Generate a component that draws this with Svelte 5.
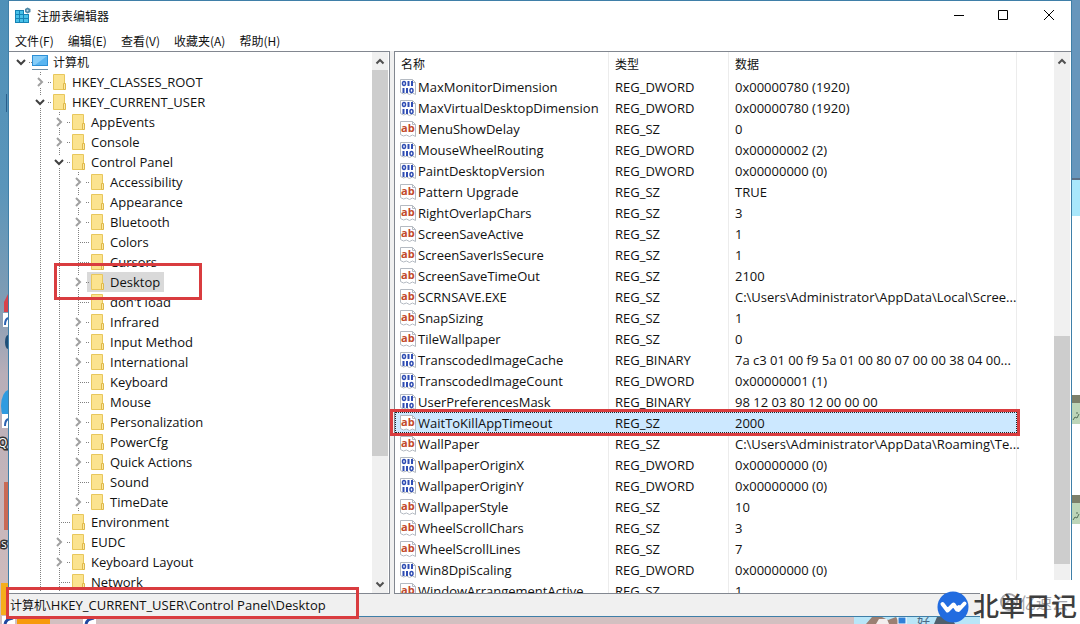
<script lang="ts">
  type TreeNode = { name: string; depth: number; state?: 'open' | 'closed' };
  type RegValue = { name: string; type: string; data: string };

  const menus = ['文件(F)', '编辑(E)', '查看(V)', '收藏夹(A)', '帮助(H)'];

  let nodes: TreeNode[] = $state([
    { name: '计算机', depth: 0, state: 'open' },
    { name: 'HKEY_CLASSES_ROOT', depth: 1, state: 'closed' },
    { name: 'HKEY_CURRENT_USER', depth: 1, state: 'open' },
    { name: 'AppEvents', depth: 2, state: 'closed' },
    { name: 'Console', depth: 2, state: 'closed' },
    { name: 'Control Panel', depth: 2, state: 'open' },
    { name: 'Accessibility', depth: 3, state: 'closed' },
    { name: 'Appearance', depth: 3, state: 'closed' },
    { name: 'Bluetooth', depth: 3, state: 'closed' },
    { name: 'Colors', depth: 3 },
    { name: 'Cursors', depth: 3 },
    { name: 'Desktop', depth: 3, state: 'closed' },
    { name: "don't load", depth: 3 },
    { name: 'Infrared', depth: 3, state: 'closed' },
    { name: 'Input Method', depth: 3, state: 'closed' },
    { name: 'International', depth: 3, state: 'closed' },
    { name: 'Keyboard', depth: 3 },
    { name: 'Mouse', depth: 3 },
    { name: 'Personalization', depth: 3, state: 'closed' },
    { name: 'PowerCfg', depth: 3, state: 'closed' },
    { name: 'Quick Actions', depth: 3, state: 'closed' },
    { name: 'Sound', depth: 3 },
    { name: 'TimeDate', depth: 3, state: 'closed' },
    { name: 'Environment', depth: 2 },
    { name: 'EUDC', depth: 2, state: 'closed' },
    { name: 'Keyboard Layout', depth: 2, state: 'closed' },
    { name: 'Network', depth: 2 }
  ]);

  const values: RegValue[] = [
    { name: 'MaxMonitorDimension', type: 'REG_DWORD', data: '0x00000780 (1920)' },
    { name: 'MaxVirtualDesktopDimension', type: 'REG_DWORD', data: '0x00000780 (1920)' },
    { name: 'MenuShowDelay', type: 'REG_SZ', data: '0' },
    { name: 'MouseWheelRouting', type: 'REG_DWORD', data: '0x00000002 (2)' },
    { name: 'PaintDesktopVersion', type: 'REG_DWORD', data: '0x00000000 (0)' },
    { name: 'Pattern Upgrade', type: 'REG_SZ', data: 'TRUE' },
    { name: 'RightOverlapChars', type: 'REG_SZ', data: '3' },
    { name: 'ScreenSaveActive', type: 'REG_SZ', data: '1' },
    { name: 'ScreenSaverIsSecure', type: 'REG_SZ', data: '1' },
    { name: 'ScreenSaveTimeOut', type: 'REG_SZ', data: '2100' },
    { name: 'SCRNSAVE.EXE', type: 'REG_SZ', data: 'C:\\Users\\Administrator\\AppData\\Local\\Scree...' },
    { name: 'SnapSizing', type: 'REG_SZ', data: '1' },
    { name: 'TileWallpaper', type: 'REG_SZ', data: '0' },
    { name: 'TranscodedImageCache', type: 'REG_BINARY', data: '7a c3 01 00 f9 5a 01 00 80 07 00 00 38 04 00...' },
    { name: 'TranscodedImageCount', type: 'REG_DWORD', data: '0x00000001 (1)' },
    { name: 'UserPreferencesMask', type: 'REG_BINARY', data: '98 12 03 80 12 00 00 00' },
    { name: 'WaitToKillAppTimeout', type: 'REG_SZ', data: '2000' },
    { name: 'WallPaper', type: 'REG_SZ', data: 'C:\\Users\\Administrator\\AppData\\Roaming\\Te...' },
    { name: 'WallpaperOriginX', type: 'REG_DWORD', data: '0x00000000 (0)' },
    { name: 'WallpaperOriginY', type: 'REG_DWORD', data: '0x00000000 (0)' },
    { name: 'WallpaperStyle', type: 'REG_SZ', data: '10' },
    { name: 'WheelScrollChars', type: 'REG_SZ', data: '3' },
    { name: 'WheelScrollLines', type: 'REG_SZ', data: '7' },
    { name: 'Win8DpiScaling', type: 'REG_DWORD', data: '0x00000000 (0)' },
    { name: 'WindowArrangementActive', type: 'REG_SZ', data: '1' }
  ];

  let selectedKey = $state('Desktop');
  let selectedValue = $state('WaitToKillAppTimeout');

  // Drop every node that sits below a closed one
  let visible = $derived.by(() => {
    const result: TreeNode[] = [];
    let hiddenBelow = Infinity;
    for (const node of nodes) {
      if (node.depth > hiddenBelow) continue;
      hiddenBelow = node.state === 'closed' ? node.depth : Infinity;
      result.push(node);
    }
    return result;
  });

  function toggle(node: TreeNode) {
    node.state = node.state === 'open' ? 'closed' : 'open';
  }
</script>

{#snippet scrollbar(before: number, thumb: number, after: number)}
  <div class="scrollbar">
    <button aria-label="Scroll up">
      <svg width="10" height="7" viewBox="0 0 10 7"><path d="M1.5 5.5 5 2l3.5 3.5" /></svg>
    </button>
    <span style="flex-grow: {before}"></span>
    <span class="thumb" style="flex-grow: {thumb}"></span>
    <span style="flex-grow: {after}"></span>
    <button aria-label="Scroll down">
      <svg width="10" height="7" viewBox="0 0 10 7"><path d="M1.5 1.5 5 5l3.5-3.5" /></svg>
    </button>
  </div>
{/snippet}

<div class="desktop">
  <!-- Slivers of wallpaper and desktop icons round the window -->
  <svg class="wall-left" width="8" height="624" viewBox="0 0 8 624">
    <defs>
      <linearGradient id="sky" x1="0" y1="0" x2="0" y2="1">
        <stop offset="0" stop-color="#4f90b8" />
        <stop offset="0.3" stop-color="#5a95ba" />
        <stop offset="0.48" stop-color="#7f9cb4" />
        <stop offset="0.6" stop-color="#b8aeb8" />
        <stop offset="1" stop-color="#d2bdbd" />
      </linearGradient>
    </defs>
    <rect width="8" height="624" fill="url(#sky)" />
    <rect x="6" y="94" width="1" height="18" fill="#2a5f8c" />
    <path d="M8 294 4 302v10h4z" fill="#d8434c" />
    <rect x="3" y="313" width="5" height="14" fill="#fff" />
    <path d="M5 325c0-4 1-6 3-7" stroke="#2b62b0" stroke-width="2" fill="none" />
    <ellipse cx="8" cy="342" rx="3" ry="7" fill="#1f4f77" />
    <ellipse cx="9" cy="406" rx="8" ry="16" fill="#2f9be0" />
    <rect x="2" y="414" width="6" height="14" fill="#fff" />
    <path d="M5 426c0-4 1-6 3-7" stroke="#2b62b0" stroke-width="2" fill="none" />
    <rect x="4" y="482" width="4" height="48" fill="#c96a55" />
    <text x="-2" y="447" class="icon-label">Q</text>
    <text x="1" y="548" class="icon-label">s</text>
    <rect x="1" y="583" width="7" height="32" fill="#f5ae1c" />
  </svg>
  <svg class="wall-right" width="8" height="624" viewBox="0 0 8 624">
    <rect width="8" height="624" fill="#fff" />
    <rect width="8" height="180" fill="#6796bc" />
    <rect y="178" width="8" height="2" fill="#5c6f85" />
    <rect y="180" width="8" height="36" fill="#a9e7fb" />
    <g id="plant">
      <rect y="395" width="8" height="8" fill="#7c7f6a" />
      <rect y="403" width="8" height="21" fill="#bdd5b8" />
      <path d="M1 420l2-3 2 1 2-4M4 413h2" stroke="#54705a" fill="none" />
    </g>
    <use href="#plant" y="100" />
  </svg>
  <svg class="wall-bottom-left" width="100" height="8" viewBox="0 0 100 8">
    <rect x="17" width="33" height="8" fill="#f79a0c" />
    <rect x="2" width="13" height="8" fill="#fff" />
    <path d="M5 8c1-4 3-5 8-6" stroke="#2147a0" stroke-width="3" fill="none" />
    <rect x="83" width="13" height="8" fill="#fff" />
    <path d="M86 8c1-4 3-5 8-6" stroke="#2147a0" stroke-width="3" fill="none" />
  </svg>
  <svg class="wall-bottom-right" width="226" height="8" viewBox="0 0 226 8">
    <rect width="226" height="8" fill="#b9e6f8" />
    <path d="M12 8l6-7h10l6 3 8-3 4 7z" fill="#9b8073" />
    <path d="M22 8l3-5h8l2 5z" fill="#f3eeee" />
    <rect x="44" y="1" width="8" height="7" fill="#2f80d8" stroke="#fff" />
    <text x="63" y="10" font-size="13" fill="#4c6a85">好</text>
    <path d="M80 8l3-7h14l4 7z" fill="#50606c" />
  </svg>

  <div class="window">
    <header class="titlebar">
      <svg width="17" height="17" viewBox="0 0 17 17">
        <path d="M0 3h9v4h5v9H0z" fill="#1583b5" />
        <path d="M1 4h3v3H1zM5 4h3v3H5zM1 8h3v3H1zM5 8h3v3H5zM9 8h4v3H9zM1 12h3v3H1zM5 12h3v3H5zM9 12h4v3H9z" fill="#47c0e8" />
        <path d="M12.500.500 15.500 2v3l-3 1.500L10 5V2z" fill="#4d86a5" />
        <circle cx="12.500" cy="3.500" r="1" fill="#b8dced" />
      </svg>
      <h1>注册表编辑器</h1>
      <div class="controls">
        <button aria-label="Minimize"><svg width="12" height="12" viewBox="0 0 12 12"><path d="M1 5.500h10" /></svg></button>
        <button aria-label="Maximize"><svg width="12" height="12" viewBox="0 0 12 12"><path d="M.5.500h9v9h-9z" /></svg></button>
        <button aria-label="Close"><svg width="12" height="12" viewBox="0 0 12 12"><path d="M1 0l10 10M11 0 1 10" /></svg></button>
      </div>
    </header>

    <nav class="menubar">
      {#each menus as menu}
        <button>{menu}</button>
      {/each}
    </nav>

    <div class="panes">
      <section class="pane tree-pane">
        <ul class="tree">
          {#each visible as node (node.name)}
            <li>
              {#each { length: Math.max(node.depth - 1, 0) } as _, i}
                {#if i === 0}<span class="cell"></span>{/if}
                <span class="cell guide"></span>
              {/each}
              {#if node.depth === 1}<span class="cell"></span>{/if}
              <span class="cell branch" class:line={node.depth > 0}>
                {#if node.state}
                  <svg class="stub" width="4" height="1"><path d="M0 .5h4" /></svg>
                  <button class="toggle" class:open={node.state === 'open'} aria-label="Toggle {node.name}" onclick={() => toggle(node)}>
                    <svg width="10" height="10" viewBox="0 0 10 10">
                      <path d={node.state === 'open' ? 'M1 3l4 4 4-4' : 'M3 1l4 4-4 4'} />
                    </svg>
                  </button>
                {:else}
                  <svg class="stub" width="12" height="1"><path d="M0 .5h12" /></svg>
                {/if}
              </span>
              <button class="key" class:selected={node.name === selectedKey} class:cjk={node.depth === 0} onclick={() => (selectedKey = node.name)}>
                {#if node.depth === 0}
                  <svg width="18" height="16" viewBox="0 0 18 16">
                    <path d="M2 1h16v11H2z" fill="#2c8fd6" />
                    <path d="M3 2h14v9H3z" fill="#58b4f0" />
                    <path d="M3 2h14L5 11H3z" fill="#86cdf8" />
                    <path d="M2 15.500h16" stroke="#6f8ea6" />
                  </svg>
                {:else}
                  <svg width="18" height="16" viewBox="0 0 18 16">
                    <path d="M4.500.500h11v15h-11z" fill="#fbe38f" stroke="#e8c75c" />
                    <path d="M14.500 9.500h2v6h-2z" fill="#fbe9a8" stroke="#dfb94a" />
                  </svg>
                {/if}
                <span>{node.name}</span>
              </button>
            </li>
          {/each}
        </ul>
        {@render scrollbar(0, 386, 119)}
      </section>

      <section class="pane list-pane">
        <div class="list">
          <table>
            <colgroup>
              <col class="col-name" />
              <col class="col-type" />
              <col />
            </colgroup>
            <thead>
              <tr><th>名称</th><th>类型</th><th>数据</th></tr>
            </thead>
            <tbody>
              {#each values as value}
                <tr class:selected={value.name === selectedValue} onclick={() => (selectedValue = value.name)}>
                  <td>
                    <div class="name">
                      <svg width="16" height="16" viewBox="0 0 16 16">
                        <path d="M.5.500h12l3 3v12l-3-1.500-3 1.500-3-1.500-3 1-3-1.500z" fill="#fff" stroke="#b4bac2" />
                        <path d="M12.500.500v3h3" fill="none" stroke="#b4bac2" />
                        {#if value.type === 'REG_SZ'}
                          <text x="1" y="11" class="ab">ab</text>
                        {:else}
                          <g class="bits">
                            <ellipse cx="4" cy="4.500" rx="1.500" ry="2" />
                            <path d="M8.500 2v5M12 2v5" />
                            <path d="M3.500 9v5M7 9v5" />
                            <ellipse cx="11.500" cy="11.500" rx="1.500" ry="2" />
                          </g>
                        {/if}
                      </svg>
                      <span>{value.name}</span>
                    </div>
                  </td>
                  <td>{value.type}</td>
                  <td>{value.data}</td>
                </tr>
              {/each}
            </tbody>
          </table>
        </div>
        {@render scrollbar(266, 228, 11)}
      </section>
    </div>

    <footer class="status"><span class="cjk">计算机</span>\HKEY_CURRENT_USER\Control Panel\Desktop</footer>
  </div>

  <div class="mark mark-key"></div>
  <div class="mark mark-value"></div>
  <div class="mark mark-path"></div>

  <div class="watermark">
    <div class="ghost">
      <svg width="22" height="20" viewBox="0 0 22 20">
        <circle cx="11" cy="10" r="8" />
        <path d="M6 12c2 2 4-4 6-4s3 4 5 2" />
      </svg>
      <span>亿速云</span>
    </div>
    <svg class="badge" width="32" height="32" viewBox="0 0 32 32">
      <circle cx="16" cy="16" r="15.500" fill="#226ce0" />
      <path d="M5.500 13l5 6.500 6-6 3.500 5 2-2.500M21.500 19l6-6.500" fill="none" stroke="#fff" stroke-width="4" stroke-linecap="round" stroke-linejoin="round" />
    </svg>
    <strong>北单日记</strong>
  </div>
</div>

<style>
  :global(body) {
    margin: 0;
  }

  .desktop {
    position: relative;
    box-sizing: border-box;
    height: 100vh;
    padding: 0 8px 7px;
    overflow: hidden;
    background: #d3c0c1;
    color: #111;
    font-family: 'Open Sans', 'Noto Sans CJK SC', sans-serif;
    font-size: 13px;
    line-height: 20px;
  }

  .wall-left {
    position: absolute;
    top: 0;
    left: 0;
  }

  .wall-right {
    position: absolute;
    top: 0;
    right: 0;
  }

  .wall-bottom-left {
    position: absolute;
    bottom: 0;
    left: 0;
  }

  .wall-bottom-right {
    position: absolute;
    right: 0;
    bottom: 0;
  }

  .icon-label {
    fill: #fff;
    stroke: #333;
    stroke-width: 3;
    paint-order: stroke;
    font-size: 12px;
  }

  .window {
    position: relative;
    display: flex;
    flex-direction: column;
    box-sizing: border-box;
    height: 100%;
    border: 1px solid #3f7fa8;
    background: #fff;
  }

  button {
    padding: 0;
    border: 0;
    background: none;
    color: inherit;
    font: inherit;
  }

  svg {
    display: block;
    flex: none;
  }

  .cjk,
  h1,
  .menubar,
  th {
    font-family: 'Noto Sans CJK SC', sans-serif;
    font-size: 12px;
  }

  /* Title and menu */
  .titlebar {
    display: flex;
    align-items: center;
    gap: 5px;
    height: 29px;
    padding-left: 6px;
  }

  h1 {
    flex: 1;
    margin: 0;
    font-weight: 400;
  }

  .controls {
    display: flex;
  }

  .controls button {
    display: grid;
    place-items: center;
    width: 45px;
    height: 29px;
  }

  .controls path {
    fill: none;
    stroke: #000;
  }

  .menubar {
    display: flex;
    gap: 14px;
    height: 21px;
    padding-left: 6px;
  }

  /* Panes */
  .panes {
    display: grid;
    grid-template-columns: 381px 1fr;
    gap: 4px;
    flex: 1;
    min-height: 0;
    background: #f0f0f0;
  }

  .pane {
    display: flex;
    min-width: 0;
    min-height: 0;
    border-top: 1px solid #828790;
    border-bottom: 1px solid #828790;
    background: #fff;
  }

  .tree-pane {
    padding-right: 1px;
    border-right: 1px solid #828790;
  }

  .list-pane {
    padding-right: 1px;
    border-left: 1px solid #828790;
  }

  .scrollbar {
    display: flex;
    flex-direction: column;
    width: 16px;
    background: #f0f0f0;
  }

  .scrollbar button {
    display: grid;
    place-items: center;
    height: 18px;
  }

  .scrollbar path {
    fill: none;
    stroke: #505050;
    stroke-width: 2;
  }

  .thumb {
    background: #cdcdcd;
  }

  /* Key tree */
  .tree {
    flex: 1;
    margin: 0;
    padding: 0 0 0 2px;
    overflow: hidden;
    list-style: none;
  }

  .tree li {
    display: flex;
    height: 20px;
  }

  .cell {
    position: relative;
    width: 19px;
    height: 20px;
  }

  .guide,
  .line {
    background: repeating-linear-gradient(#808080 0 1px, transparent 1px 2px) 10px 0 / 1px 100% no-repeat;
  }

  .toggle {
    display: grid;
    place-items: center;
    width: 17px;
    height: 12px;
    margin: 4px 1px;
    background: #fff;
  }

  .toggle path {
    fill: none;
    stroke: #a0a0a0;
    stroke-width: 2;
  }

  .toggle.open path {
    stroke: #404040;
  }

  .stub {
    position: absolute;
    top: 10px;
    right: -3px;
    z-index: 1;
  }

  .stub path {
    stroke: #808080;
    stroke-dasharray: 1 1;
  }

  .key {
    display: flex;
    align-items: center;
    gap: 5px;
    height: 20px;
    padding-right: 4px;
    white-space: nowrap;
  }

  .key.selected {
    background: #d9d9d9;
  }

  /* Value list */
  .list {
    flex: 1;
    min-width: 0;
    padding-right: 37px;
    overflow: hidden;
  }

  table {
    width: 100%;
    border-collapse: separate;
    border-spacing: 0;
    table-layout: fixed;
  }

  .col-name {
    width: 214px;
  }

  .col-type {
    width: 120px;
  }

  th,
  td {
    box-sizing: border-box;
    padding: 0 0 0 6px;
    border-right: 1px solid #ececec;
    text-align: left;
    white-space: nowrap;
  }

  th {
    height: 24px;
    font-weight: 400;
  }

  td {
    height: 21px;
  }

  td:first-child {
    padding-left: 5px;
  }

  tr.selected {
    outline: 1px dotted #222;
    outline-offset: -1px;
    background: #cce8ff;
  }

  .selected td {
    border-color: transparent;
  }

  .name {
    display: flex;
    align-items: center;
    gap: 2px;
  }

  .ab {
    fill: #c2492b;
    font: bold 11px 'Open Sans', sans-serif;
  }

  .bits {
    fill: none;
    stroke: #2f4db3;
    stroke-width: 2;
  }

  .bits ellipse {
    stroke-width: 1.5;
  }

  .status {
    height: 22px;
    padding-left: 1px;
    background: #f0f0f0;
    line-height: 22px;
  }

  /* Red call-outs over the window */
  .mark {
    position: absolute;
    box-sizing: border-box;
    border: 3px solid #d93c3f;
    pointer-events: none;
  }

  .mark-key {
    top: 263px;
    left: 54px;
    width: 148px;
    height: 37px;
  }

  .mark-value {
    top: 409px;
    right: 60px;
    left: 390px;
    height: 27px;
  }

  .mark-path {
    bottom: 5px;
    left: 6px;
    width: 353px;
    height: 32px;
  }

  /* Site watermark in the corner */
  .watermark {
    position: absolute;
    right: 0;
    bottom: 0;
    display: flex;
    align-items: flex-end;
    gap: 4px;
    height: 44px;
    padding-right: 3px;
    background: linear-gradient(#fff, #fff) right / 100px 100% no-repeat;
  }

  .badge {
    position: relative;
    margin-bottom: 1px;
  }

  .watermark strong {
    position: relative;
    color: #3d3d3d;
    font-family: 'Noto Sans CJK SC', sans-serif;
    font-size: 26px;
    font-weight: 500;
    line-height: 38px;
  }

  .ghost {
    position: absolute;
    top: 12px;
    right: 12px;
    display: flex;
    align-items: center;
    color: #a5a5ab;
    font-family: 'Noto Sans CJK SC', sans-serif;
    font-size: 16px;
  }

  .ghost svg {
    fill: none;
    stroke: #a5a5ab;
    stroke-width: 2;
  }
</style>
